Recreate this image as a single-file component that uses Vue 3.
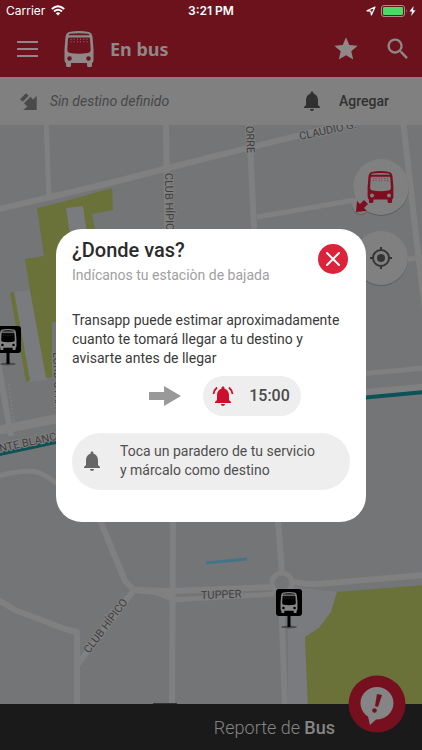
<script setup>
import { ref } from 'vue'

const dialogOpen = ref(true)

const alertTime = '15:00'

// Calles del mapa: trazado y ancho
const roads = [
  { d: 'M-5 210L110 183L215 156L350 123', w: 6 },
  { d: 'M46 120L49 198', w: 5 },
  { d: 'M166 120L168 290L173 520L172 710', w: 6 },
  { d: 'M249 120L254 228L278 520L282 574', w: 6 },
  { d: 'M281 592L285 710', w: 6 },
  { d: 'M403 120L418 253L425 310', w: 6 },
  { d: 'M257 217L355 200', w: 5 },
  { d: 'M405 260L425 256', w: 5 },
  { d: 'M360 374L425 368', w: 5 },
  { d: 'M360 393L425 387', w: 7 },
  { d: 'M-2 362L11 436', w: 6 },
  { d: 'M-5 431L60 418', w: 9 },
  { d: 'M-5 477Q10 472 30 471Q42 471 60 486', w: 5 },
  { d: 'M-5 598L15 610L65 629L77 632V710', w: 6 },
  { d: 'M78 664L134 590', w: 6 },
  { d: 'M100 520L125 581L134 590L156 592L173 599', w: 6 },
  { d: 'M134 590L172 591L274 587', w: 6 },
  { d: 'M172 600L274 594', w: 5 },
  { d: 'M288 580Q305 586 330 583L425 575', w: 6 },
]

const labels = [
  { text: 'CLUB HÍPICO', x: 165, y: 173, a: 89 },
  { text: 'ORRE', x: 246, y: 126, a: 88 },
  { text: 'CLAUDIO G.', x: 300, y: 140, a: -12 },
  { text: 'NTE BLANC', x: 0, y: 452, a: -12 },
  { text: 'LORD STRA', x: 53, y: 352, a: 88 },
  { text: 'CLUB HÍPICO', x: 89, y: 654, a: -53 },
  { text: 'TUPPER', x: 201, y: 599, a: -2 },
]

const stops = [
  { x: -5, y: 326 },
  { x: 276, y: 589 },
]
</script>

<template>
  <div class="app">
    <!-- Iconos compartidos -->
    <svg class="sprite" aria-hidden="true">
      <symbol id="bus" viewBox="0 0 30 36">
        <path fill="currentColor" fill-rule="evenodd" d="M5 1Q15-1 25 1Q28 2 28.500 6L29.500 18V29Q29.500 31.500 28 32V34.500Q28 36 26.500 36H24.500Q23 36 23 34.500V32H7V34.500Q7 36 5.500 36H3.500Q2 36 2 34.500V32Q0.500 31.500 0.500 29V18L1.500 6Q2 2 5 1ZM6 2.800Q4.500 3 4.500 4.200H25.500Q25.500 3 24 2.800Q15 1.500 6 2.800ZM5 6.500Q4.200 6.500 4 7.500L3.300 19Q3.300 21.500 6 22Q15 23.300 24 22Q26.700 21.500 26.700 19L26 7.500Q25.800 6.500 25 6.500Z" />
        <circle cx="5.500" cy="27.500" r="2.200" class="lamp" />
        <circle cx="24.500" cy="27.500" r="2.200" class="lamp" />
        <path d="M7 7.500V11.500M10 7.500V11.500M13.500 7.500V11.500M16.500 7.500V11.500M20 7.500V11.500M23 7.500V11.500" stroke="currentColor" stroke-width="1" stroke-dasharray="1.500 1" opacity="0.600" />
      </symbol>
      <symbol id="bell" viewBox="0 0 24 24">
        <path fill="currentColor" d="M12 22c1.100 0 2-.9 2-2h-4c0 1.100.9 2 2 2zm6-6v-5c0-3.070-1.630-5.640-4.500-6.320V4c0-.83-.67-1.500-1.500-1.500s-1.500.67-1.500 1.500v.68C7.640 5.360 6 7.920 6 11v5l-2 2v1h16v-1l-2-2z" />
      </symbol>
    </svg>

    <header class="top">
      <div class="status">
        <span class="carrier">
          Carrier
          <svg width="14" height="11" viewBox="0 0 14 11">
            <g fill="none" stroke="#fff" stroke-width="1.900">
              <path d="M0.800 4Q7-1.700 13.200 4" />
              <path d="M3 6.500Q7 3 11 6.500" />
            </g>
            <path d="M7 10.500L4.800 8.200Q7 6.500 9.200 8.200Z" fill="#fff" />
          </svg>
        </span>
        <span class="clock">3:21 PM</span>
        <span class="power">
          <svg width="10" height="10" viewBox="0 0 10 10">
            <path d="M1 4.800L9 1L5.400 9L4.800 5.200Z" fill="none" stroke="#fff" stroke-width="1.200" stroke-linejoin="round" />
          </svg>
          <svg width="27" height="12" viewBox="0 0 27 12">
            <rect x="0.500" y="0.500" width="23" height="11" rx="2.500" fill="none" stroke="#b08a8f" />
            <rect x="2" y="2" width="20" height="8" rx="1.200" fill="#4cd964" />
            <path d="M25 4Q26.500 6 25 8Z" fill="#b08a8f" />
          </svg>
          <svg width="7" height="10" viewBox="0 0 7 10">
            <path d="M4.600 0L0.500 5.600H3L2.200 10L6.500 4.200H4Z" fill="#fff" />
          </svg>
        </span>
      </div>
      <div class="toolbar">
        <button class="menu" aria-label="Menú">
          <svg width="22" height="18" viewBox="0 0 22 18">
            <path d="M1 2H22M1 9H22M1 16H22" stroke="currentColor" stroke-width="2" />
          </svg>
        </button>
        <svg class="logo" width="30" height="36"><use href="#bus" /></svg>
        <h1>En bus</h1>
        <button class="star" aria-label="Favoritos">
          <svg width="28" height="28" viewBox="0 0 24 24">
            <path fill="currentColor" d="M12 17.270L18.180 21l-1.640-7.030L22 9.240l-7.190-.61L12 2 9.190 8.630 2 9.240l5.460 4.730L5.820 21z" />
          </svg>
        </button>
        <button aria-label="Buscar">
          <svg width="28" height="28" viewBox="0 0 24 24">
            <path fill="currentColor" d="M15.500 14h-.79l-.28-.27C15.410 12.590 16 11.110 16 9.500 16 5.910 13.090 3 9.500 3S3 5.910 3 9.500 5.910 16 9.500 16c1.610 0 3.090-.59 4.230-1.570l.27.28v.79l5 4.990L20.490 19l-4.990-5zm-6 0C7.010 14 5 11.990 5 9.500S7.010 5 9.500 5 14 7.010 14 9.500 11.990 14 9.500 14z" />
          </svg>
        </button>
      </div>
    </header>

    <div class="destination">
      <svg width="20" height="20" viewBox="0 0 20 20" fill="#4a4a4a">
        <path d="M1 8.300L7 2.300L9.700 4.800L3.700 10.800Z" />
        <path d="M5 12.300L11.500 5.800L14 8.500L17.700 5V19H4L8.500 15.700Z" />
      </svg>
      <em>Sin destino definido</em>
      <button class="add">
        <svg width="24" height="24"><use href="#bell" /></svg>
        Agregar
      </button>
    </div>

    <main class="map">
      <svg class="canvas" viewBox="0 125 422 579" preserveAspectRatio="xMidYMid slice">
        <g fill="#7a7b7f">
          <path d="M14 292L30 290L48 380L30 382Z" />
          <path d="M288 586L337 592L331 612L319 628L305 637L308 704H288Z" />
        </g>
        <g fill="#6a7139">
          <path d="M37 208L66 201L112 188L113 210L92 214L97 240L60 322H52V377L46 378L30 290L25 259L44 256Z" />
          <path d="M10 293L14 292L30 380L26 382Z" />
          <path d="M337 592L425 585V710H308L305 637L319 628L331 612Z" />
        </g>
        <path d="M66 208L83 206L87 235H70Z" fill="#7a7b7f" />
        <path v-for="road in roads" :key="road.d" :d="road.d" :stroke-width="road.w" class="road" />
        <circle cx="282" cy="583" r="10" fill="#747577" stroke="#808080" stroke-width="5" />
        <path d="M9 384L14 422" stroke="#858585" stroke-dasharray="2 2" />
        <path d="M-5 455L60 441M360 398L425 392" stroke="#0b5357" stroke-width="4" />
        <path d="M206 563L247 559" stroke="#44748a" stroke-width="3" />
        <text v-for="label in labels" :key="label.x" :transform="`translate(${label.x} ${label.y}) rotate(${label.a})`">{{ label.text }}</text>
        <g v-for="stop in stops" :key="stop.x" :transform="`translate(${stop.x} ${stop.y})`">
          <ellipse cx="13" cy="38" rx="8" ry="1.500" fill="#4c4c4c" />
          <path d="M13 26V38" stroke="#000" stroke-width="3" />
          <rect width="26" height="27" rx="3" />
          <use href="#bus" x="4" y="3" width="18" height="21" class="stop-bus" />
        </g>
        <rect x="153" y="703" width="24" height="1" fill="#333" />
      </svg>

      <div class="map-buttons">
        <button aria-label="Mi bus">
          <svg width="60" height="60" viewBox="0 0 60 60">
            <circle cx="32" cy="30" r="28" class="shade" />
            <circle cx="12" cy="48" r="9" class="shade" />
            <circle cx="32" cy="29" r="28" fill="#808080" />
            <circle cx="12" cy="47" r="9" fill="#808080" />
            <use href="#bus" x="18" y="13" width="27" height="32" class="red-bus" />
            <path d="M7 54L8 43L11 46L15 42L19 46L15 50L18 53Z" fill="#7f0d20" />
          </svg>
        </button>
        <button aria-label="Mi ubicación">
          <svg width="60" height="60" viewBox="0 0 60 60">
            <circle cx="32" cy="30" r="27" class="shade" />
            <circle cx="32" cy="29" r="27" fill="#808080" />
            <g fill="none" stroke="#343434" stroke-width="2">
              <circle cx="32" cy="29" r="8" />
              <path d="M32 18V22M32 36V40M21 29H25M39 29H43" />
            </g>
            <circle cx="32" cy="29" r="4" fill="#343434" />
          </svg>
        </button>
      </div>
    </main>

    <footer class="report">
      <p>Reporte de <strong>Bus</strong></p>
      <button class="fab" aria-label="Reportar">
        <svg width="58" height="58" viewBox="0 0 58 58">
          <circle cx="29" cy="29" r="28.500" fill="#76101f" />
          <path d="M29 12C20 12 12.500 19 12.500 28C12.500 34 16 39 20 41.500L22 50L28 44.500C38 44.500 45.500 37 45.500 28C45.500 19 38 12 29 12Z" fill="#858585" />
          <path d="M29 19L34 20L30 32L27 31Z" fill="#76101f" />
          <circle cx="26.500" cy="35.500" r="2.300" fill="#76101f" />
        </svg>
      </button>
    </footer>

    <div v-if="dialogOpen" class="backdrop">
      <section class="dialog" role="dialog" aria-labelledby="dialog-title">
        <div class="dialog-head">
          <div>
            <h2 id="dialog-title">¿Donde vas?</h2>
            <p class="subtitle">Indícanos tu estaciòn de bajada</p>
          </div>
          <button class="close" aria-label="Cerrar" @click="dialogOpen = false">
            <svg width="16" height="16" viewBox="0 0 16 16">
              <path d="M2 2L14 14M14 2L2 14" stroke="#fff" stroke-width="2" stroke-linecap="round" />
            </svg>
          </button>
        </div>
        <p class="text">Transapp puede estimar aproximadamente cuanto te tomará llegar a tu destino y avisarte antes de llegar</p>
        <div class="example">
          <svg width="32" height="20" viewBox="0 0 32 20">
            <path d="M0 6H15V0L32 10L15 20V14H0Z" fill="#999" />
          </svg>
          <div class="time">
            <svg width="24" height="24" viewBox="0 0 24 24">
              <use href="#bell" width="24" height="24" />
              <path d="M2.500 10Q3 6 6 3.500M21.500 10Q21 6 18 3.500" fill="none" stroke="currentColor" stroke-width="1.800" />
            </svg>
            {{ alertTime }}
          </div>
        </div>
        <div class="hint">
          <svg width="24" height="24"><use href="#bell" /></svg>
          <p>Toca un paradero de tu servicio<br>y márcalo como destino</p>
        </div>
      </section>
    </div>
  </div>
</template>

<style>
body {
  margin: 0;
  background: #1a1a1a;
}
</style>

<style scoped>
.app {
  display: flex;
  flex-direction: column;
  min-height: 100vh;
  font-family: Roboto, "Liberation Sans", sans-serif;
}

h1, h2, p {
  margin: 0;
}

button {
  padding: 0;
  border: 0;
  background: none;
  color: inherit;
  font: inherit;
  cursor: pointer;
}

svg {
  display: block;
  flex: none;
}

.sprite {
  position: absolute;
  width: 0;
  height: 0;
}

.top {
  background: #6b121d;
  color: #8e8888;
}

.status {
  display: grid;
  grid-template-columns: 1fr auto 1fr;
  align-items: center;
  height: 21px;
  padding: 0 6px;
  color: #fff;
  font-family: Inter, "Liberation Sans", sans-serif;
  font-size: 12px;

  .carrier {
    display: flex;
    align-items: center;
    gap: 6px;
  }

  .clock {
    font-weight: 600;
  }

  .power {
    display: flex;
    align-items: center;
    justify-content: flex-end;
    gap: 5px;

    svg:last-child {
      margin-left: -4px;
    }
  }
}

.toolbar {
  display: flex;
  align-items: center;
  height: 56px;
  padding: 0 10px 0 16px;

  .logo {
    margin: 0 16px 0 26px;
    --lamp: #6b121d;
  }

  h1 {
    flex: 1;
    font-family: "Noto Sans", sans-serif;
    font-size: 18px;
    font-weight: 700;
  }

  .star {
    margin-right: 24px;
  }
}

.lamp {
  fill: var(--lamp);
}

.destination {
  display: flex;
  align-items: center;
  height: 48px;
  padding: 0 33px 0 19px;
  background: #808080;
  color: #474747;
  font-size: 14px;

  em {
    flex: 1;
    margin-left: 11px;
  }

  .add {
    display: flex;
    align-items: center;
    gap: 15px;
    color: #303030;
    font-weight: 500;
  }
}

.map {
  position: relative;
  flex: 1;
  min-height: 400px;
  background: #747577;
}

.canvas {
  position: absolute;
  width: 100%;
  height: 100%;

  text {
    fill: #3e3e3e;
    stroke: #808080;
    stroke-width: 2px;
    paint-order: stroke;
    font-size: 11px;
  }
}

.road {
  fill: none;
  stroke: #808080;
  stroke-linejoin: round;
}

.stop-bus {
  color: #858585;
  --lamp: #000;
}

.red-bus {
  color: #7f0d20;
  --lamp: #808080;
}

.shade {
  fill: #5c5d5f;
}

.map-buttons {
  position: absolute;
  top: 33px;
  right: 13px;
  display: grid;
  gap: 11px;
}

.report {
  position: relative;
  display: flex;
  align-items: center;
  justify-content: flex-end;
  height: 46px;
  padding-right: 87px;
  background: #1a1a1a;
  color: #858585;
  font-size: 18px;

  p {
    font-weight: 300;
  }

  strong {
    font-weight: 500;
  }

  .fab {
    position: absolute;
    top: -29px;
    right: 16px;
  }
}

.backdrop {
  position: fixed;
  inset: 0;
  display: flex;
  align-items: center;
  justify-content: center;
  padding: 0 56px;
}

.dialog {
  box-sizing: border-box;
  width: 100%;
  max-width: 360px;
  padding: 8px 16px 32px;
  border-radius: 26px;
  background: #fff;
  color: #3a3a3a;
  font-size: 14px;
  line-height: 19px;

  h2 {
    color: #2b2b2b;
    font-size: 20px;
    font-weight: 500;
    line-height: 26px;
  }

  .subtitle {
    color: #a0a0a3;
    line-height: 24px;
  }

  .text {
    margin: 24px 0 8px;
  }
}

.dialog-head {
  display: flex;
  align-items: center;
  justify-content: space-between;
}

.close {
  display: flex;
  align-items: center;
  justify-content: center;
  width: 30px;
  height: 30px;
  margin: 0 2px 6px 0;
  border-radius: 50%;
  background: #dc2339;
}

.example {
  display: flex;
  align-items: center;
  justify-content: center;
  gap: 22px;
  padding-left: 28px;
}

.time {
  display: flex;
  align-items: center;
  gap: 14px;
  height: 40px;
  padding: 0 11px 0 8px;
  border-radius: 20px;
  background: #eee;
  color: #4a4a4a;
  font-size: 16px;
  font-weight: 500;

  svg {
    color: #cc0f2c;
  }
}

.hint {
  display: flex;
  align-items: center;
  gap: 16px;
  height: 57px;
  margin-top: 17px;
  padding: 0 8px;
  border-radius: 29px;
  background: #eee;
  color: #4f4f4f;

  svg {
    color: #666;
  }
}
</style>
